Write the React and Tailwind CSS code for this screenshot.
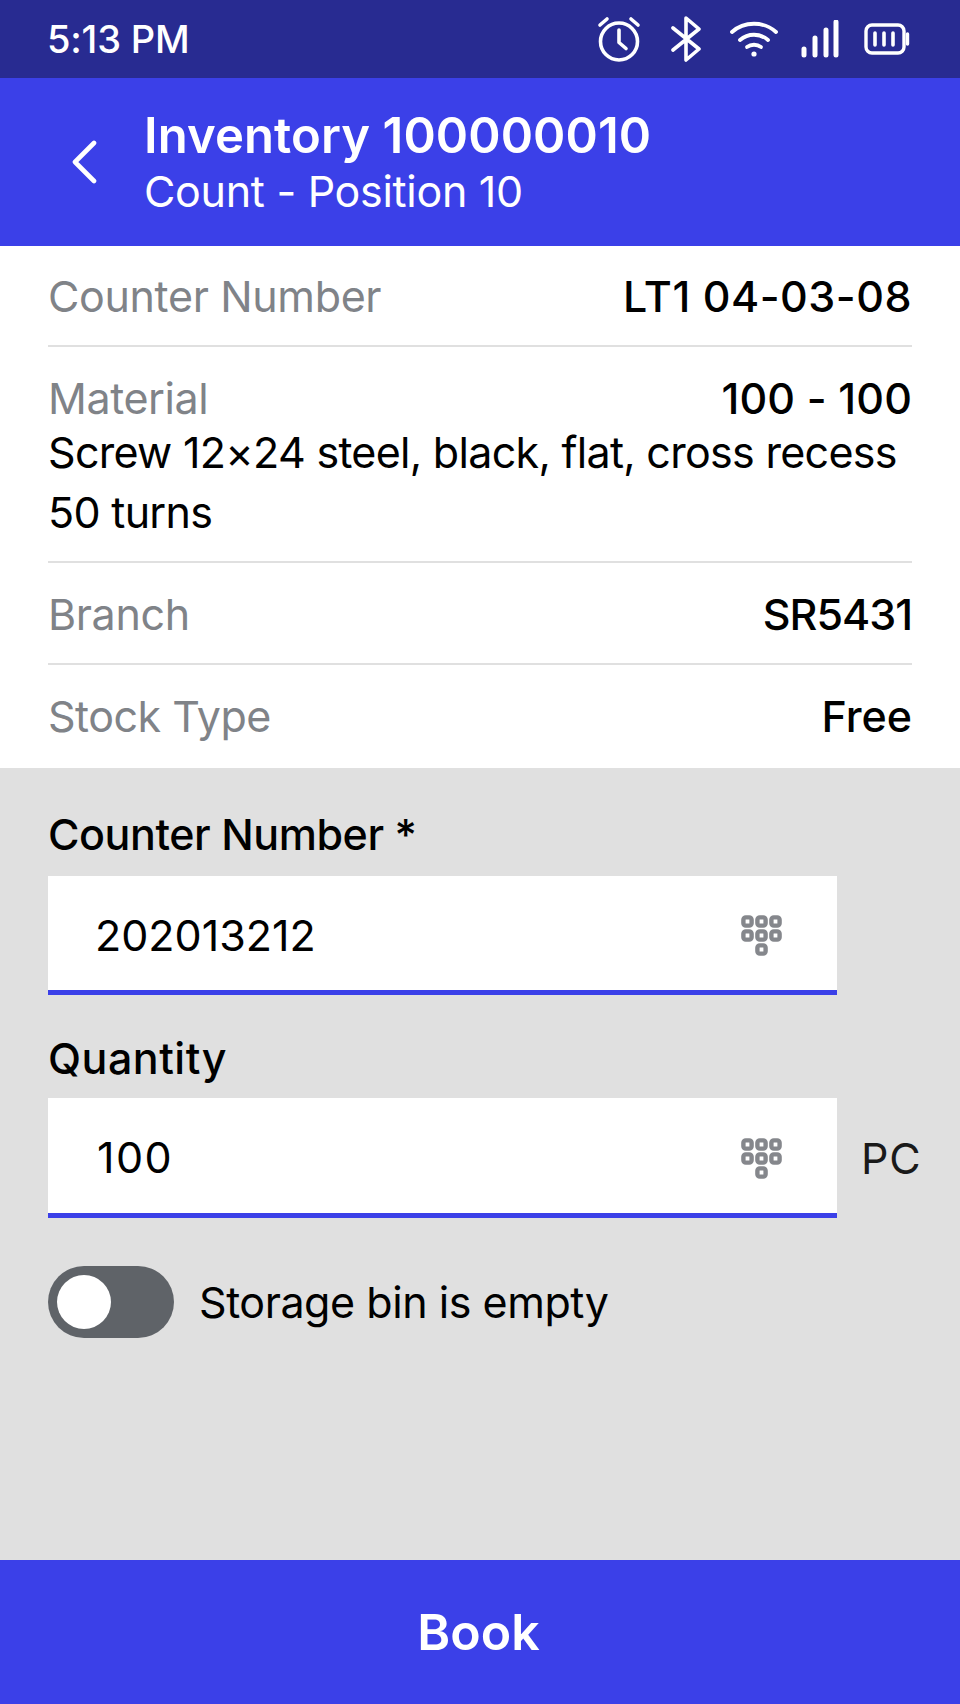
import React from "react";

const font = { fontFamily: '"Inter", "Noto Sans", sans-serif' };

function Keypad() {
  const cells = [[0,0],[14,0],[28,0],[0,14],[14,14],[28,14],[14,28]];
  return (
    <svg className="mt-[6px]" width="42" height="42" viewBox="0 0 42 42" fill="none" stroke="#85878c" strokeWidth="4.4">
      {cells.map(([x, y], i) => (
        <rect key={i} x={x + 2.4} y={y + 2.4} width="8.2" height="8.2" rx="2.4" />
      ))}
    </svg>
  );
}

function Row({ label, value, valueClass, height }) {
  return (
    <div className={`flex items-center justify-between border-b-2 border-[#e0e0e0] pt-[2px] ${height}`}>
      <span className="text-[#808388] text-[43px] tracking-[-0.35px]">{label}</span>
      <span className={`text-black text-[43px] font-medium ${valueClass}`}>{value}</span>
    </div>
  );
}

function Field({ label, value, unit, labelClass, labelGap, valueClass, height }) {
  return (
    <div>
      <div className={`text-[43px] font-medium text-black h-[64px] flex items-center ${labelClass} ${labelGap}`}>{label}</div>
      <div className="flex items-center">
        <div className={`w-[789px] shrink-0 bg-white border-b-[5px] border-[#3b40e8] flex items-center justify-between pl-[47px] pr-[54px] ${height}`}>
          <span className={`text-[43px] text-black pt-[4px] ${valueClass}`}>{value}</span>
          <Keypad />
        </div>
        {unit && <span className="ml-[24px] text-[43px] text-[#1a1a1a] tracking-[0.8px]">{unit}</span>}
      </div>
    </div>
  );
}

export default function App() {
  return (
    <div style={font} className="w-[960px] h-[1704px] flex flex-col bg-[#e0e0e0] overflow-hidden">
      <div className="h-[78px] bg-[#282b91] flex items-center justify-between pl-[47px] pr-[50px] text-white">
        <span className="text-[38px] font-medium tracking-[-0.2px]">5:13 PM</span>
        <div className="flex items-center">
          <svg width="46" height="46" viewBox="0 0 46 46" fill="none" stroke="white" strokeWidth="3.6" strokeLinecap="round" strokeLinejoin="round">
            <circle cx="23" cy="25.5" r="18.5" />
            <path d="M23 14v12.5l7 6" />
            <path d="M4 9l7-6M42 9l-7-6" />
          </svg>
          <svg className="ml-[28px]" width="34" height="46" viewBox="0 0 34 46" fill="none" stroke="white" strokeWidth="3.6" strokeLinecap="round" strokeLinejoin="round">
            <path d="M3 12l26 21-13 11V2l13 11L3 34" />
          </svg>
          <svg className="ml-[26px]" width="48" height="38" viewBox="0 0 48 38" fill="none" stroke="white" strokeWidth="3.8" strokeLinecap="round">
            <path d="M2 12c12-11 32-11 44 0" />
            <path d="M10 20c8-7 20-7 28 0" />
            <path d="M17 27c4-3 10-3 14 0" />
            <circle cx="24" cy="34" r="2.6" fill="white" stroke="none" />
          </svg>
          <svg className="ml-[23px]" width="38" height="38" viewBox="0 0 38 38" fill="none" stroke="white" strokeWidth="5" strokeLinecap="round">
            <path d="M3 35v-6M14 35V18M25 35V10M35 35V2" />
          </svg>
          <svg className="ml-[25px]" width="46" height="34" viewBox="0 0 46 34" fill="none" stroke="white" strokeLinecap="round">
            <rect x="2" y="3" width="38" height="28" rx="6" strokeWidth="3.4" />
            <path d="M43.5 12v10" strokeWidth="3.4" />
            <path d="M11 11v12M20 11v12M29 11v12" strokeWidth="3.6" />
          </svg>
        </div>
      </div>

      <div className="h-[168px] bg-[#3b40e8] flex items-center text-white">
        <svg className="ml-[71px]" width="26" height="44" viewBox="0 0 26 44" fill="none" stroke="white" strokeWidth="4.6" strokeLinecap="round" strokeLinejoin="round">
          <path d="M23 3L4 22l19 19" />
        </svg>
        <div className="ml-[47px] flex flex-col pt-[2px]">
          <span className="text-[49px] leading-[56px] font-semibold tracking-[0.1px]">Inventory 100000010</span>
          <span className="text-[43px] leading-[54px] tracking-[-0.3px]">Count - Position 10</span>
        </div>
      </div>

      <div className="bg-white px-[48px]">
        <Row label="Counter Number" value="LT1 04-03-08" valueClass="tracking-[0.5px]" height="h-[101px]" />
        <div className="border-b-2 border-[#e0e0e0] h-[216px] pt-[24px]">
          <div className="flex items-center justify-between h-[54px]">
            <span className="text-[#808388] text-[43px] tracking-[-0.4px]">Material</span>
            <span className="text-black text-[43px] font-medium tracking-[0.1px]">100 - 100</span>
          </div>
          <div className="text-[43px] leading-[60px] text-black tracking-[-0.7px] -mt-[3px]">
            Screw 12×24 steel, black, flat, cross recess
            <br />
            50 turns
          </div>
        </div>
        <Row label="Branch" value="SR5431" valueClass="tracking-[-1px]" height="h-[102px] pt-[3px]" />
        <div className="h-[103px] flex items-center justify-between">
          <span className="text-[#808388] text-[43px] tracking-[-0.5px]">Stock Type</span>
          <span className="text-black text-[43px] font-medium">Free</span>
        </div>
      </div>

      <div className="flex-1 px-[48px] pt-[34px]">
        <Field label="Counter Number *" value="202013212" labelClass="tracking-[-0.45px]" labelGap="mb-[10px]" height="h-[119px]" />
        <div className="mt-[31px]">
          <Field label="Quantity" value="100" unit="PC" labelClass="tracking-[0.5px]" labelGap="mb-[8px]" valueClass="tracking-[1.5px] ml-[2px]" height="h-[120px]" />
        </div>
        <div className="mt-[48px] flex items-center">
          <div className="w-[126px] h-[72px] rounded-full bg-[#5f6368] flex items-center pl-[9px]">
            <div className="w-[54px] h-[54px] rounded-full bg-white" />
          </div>
          <span className="ml-[25px] text-[43px] text-black tracking-[-0.45px]">Storage bin is empty</span>
        </div>
      </div>

      <div className="h-[144px] bg-[#3b40e8] flex items-center justify-center text-white text-[50px] font-semibold pr-[3px]">
        Book
      </div>
    </div>
  );
}
